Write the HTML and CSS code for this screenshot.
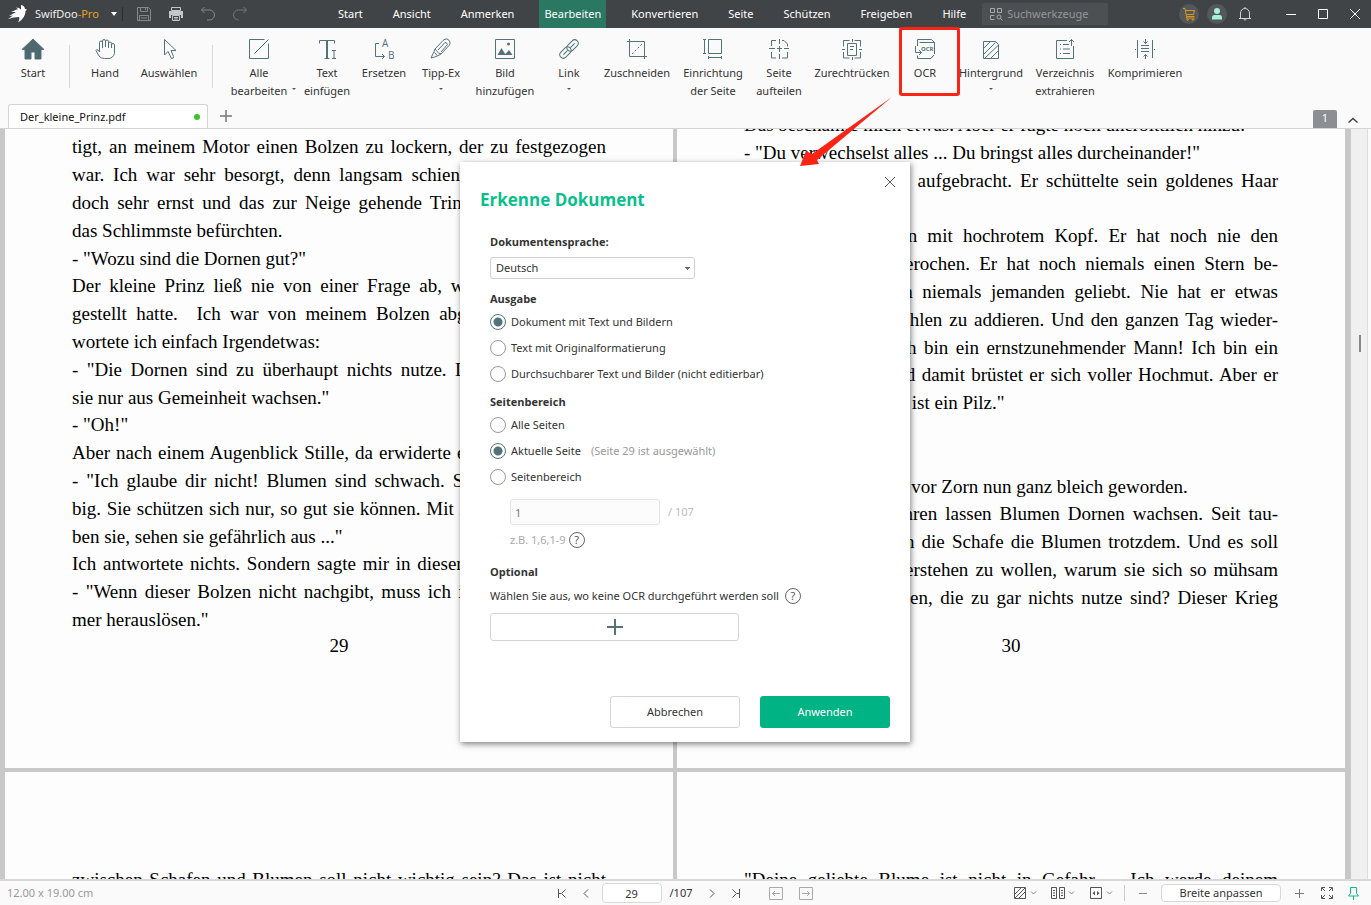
FILE: index.html
```html
<!DOCTYPE html>
<html lang="de">
<head>
<meta charset="utf-8">
<meta name="viewport" content="width=device-width, initial-scale=1">
<title>SwifDoo-Pro</title>
<link rel="stylesheet" href="styles.css">
</head>
<body>
<header class="titlebar">
  <div class="brand">
    <svg class="logo" viewBox="0 0 20 18" aria-hidden="true"><path d="M0 14 5 10.500 1 11 8 7 3 7 10 4 8 2.500 11 3 13 4.500 13 0Q16.500 .5 17 4L19 4.500 17.500 6Q17.500 13 10 17.500Q12 14 11 12Q6 12 0 14Z" fill="#fff"/></svg>
    <span class="brand-name">SwifDoo<span class="brand-pro">-Pro</span></span>
    <button class="brand-menu" aria-label="Produktmenü"><svg viewBox="0 0 6 4" width="6" height="4"><path d="M0 0h6L3 4z" fill="#fff"/></svg></button>
  </div>
  <div class="quick">
    <button aria-label="Speichern"><svg class="ic16" viewBox="0 0 16 16" fill="none" stroke="#86898c"><path d="M1.500 1.500h11l2 2v11h-13zM4.500 1.500v4h7v-4M3.500 14.500v-5h9v5M9.500 2v2M5 12h6"/></svg></button>
    <button aria-label="Drucken"><svg class="ic16" viewBox="0 0 16 16"><path d="M3.500 1.500h9v3h-9z" fill="none" stroke="#c4c6c8"/><path d="M1 5h14v7h-2V9H3v3H1z" fill="#c4c6c8"/><path d="M4.500 9.500h7v5h-7zM6 11.500h4M6 13h4" fill="none" stroke="#c4c6c8"/></svg></button>
    <button aria-label="Rückgängig"><svg class="ic16" viewBox="0 0 16 16" fill="none" stroke="#86898c"><path d="M4.500 1 1.500 4l3 3M1.500 4h8a5 5 0 0 1 0 10H7"/></svg></button>
    <button aria-label="Wiederholen"><svg class="ic16" viewBox="0 0 16 16" fill="none" stroke="#74777a"><path d="m11.500 1 3 3-3 3M14.500 4h-8a5 5 0 0 0 0 10"/></svg></button>
  </div>
  <nav class="menu">
    <button>Start</button><button>Ansicht</button><button>Anmerken</button><button class="active">Bearbeiten</button><button>Konvertieren</button><button>Seite</button><button>Schützen</button><button>Freigeben</button><button>Hilfe</button>
  </nav>
  <label class="search">
    <svg viewBox="0 0 14 14" width="14" height="14" fill="none" stroke="#a6a8aa"><path d="M1.500 1.500h4v4h-4zM8.500 1.500h4v4h-4zM5.500 8.500h-4v4h4"/><circle cx="10" cy="10" r="2"/><path d="m11.500 11.500 2 2"/></svg>
    <input type="text" placeholder="Suchwerkzeuge" aria-label="Suchwerkzeuge">
  </label>
  <div class="account">
    <button class="round" aria-label="Warenkorb"><svg class="ic16" viewBox="0 0 16 16" fill="none" stroke="#d8981c"><path d="M2 2.500h2l1.500 8h8M4.500 4.500h9l-1 4H5.500M5.500 10.500v1.500h8"/><circle cx="6.500" cy="13.500" r=".8"/><circle cx="12" cy="13.500" r=".8"/></svg></button>
    <button class="round" aria-label="Konto"><svg class="ic16" viewBox="0 0 16 16" fill="#a8f0d8"><circle cx="8" cy="5" r="3"/><path d="M3 13.500v-2q0-2.500 2.500-2.500h5q2.500 0 2.500 2.500v2z"/></svg></button>
    <button class="round plain" aria-label="Mitteilungen"><svg class="ic16" viewBox="0 0 16 16" fill="none" stroke="#d0d2d4"><path d="M2 12.500h12M3.500 12V7a4.500 4.500 0 0 1 9 0v5M8 1v1.500M6.500 13q1.500 2.500 3 0"/></svg></button>
  </div>
  <div class="window-controls">
    <button aria-label="Minimieren"><svg viewBox="0 0 12 12" width="12" height="12"><path d="M1 6.500h10" stroke="#fff"/></svg></button>
    <button aria-label="Maximieren"><svg viewBox="0 0 12 12" width="12" height="12"><path d="M1.500 1.500h9v9h-9z" stroke="#fff" fill="none"/></svg></button>
    <button aria-label="Schließen"><svg viewBox="0 0 12 12" width="12" height="12"><path d="m1 1 10 10M11 1 1 11" stroke="#fff"/></svg></button>
  </div>
</header>

<div class="ribbon" role="toolbar">
  <button class="tool t54"><svg viewBox="0 0 24 24"><path d="M12 2 1 12.500h3V22h6v-7h4v7h6v-9.500h3z" fill="#4f676e"/></svg><span>Start</span></button>
  <i class="rule rule-home"></i>
  <button class="tool t56"><svg viewBox="0 0 24 24"><path d="M18.500 11V6.500a1.500 1.500 0 0 0-3 0V11M15.500 10V4.500a1.500 1.500 0 0 0-3 0V10M12.500 10V4a1.500 1.500 0 0 0-3 0V11M9.500 11V5.500a1.500 1.500 0 0 0-3 0V15L5 13Q3.500 12 3 13.500L6 19q2 2.500 5.500 2.500h3.500q5 0 6.500-5V8a1.500 1.500 0 0 0-3 0"/></svg><span>Hand</span></button>
  <button class="tool t72"><svg viewBox="0 0 24 24"><path d="M7.500 2.500v15.500l3.500-3.500 3.500 7q2.500 0 2-2L14 13.500h5z"/></svg><span>Auswählen</span></button>
  <i class="rule rule-tools"></i>
  <button class="tool t76"><svg viewBox="0 0 24 24"><path d="M17.500 2.500h-15v19h19V6.500M7.500 16.500l14-14"/></svg><span>Alle<br>bearbeiten</span><i class="caret caret-side"></i></button>
  <button class="tool t60"><svg viewBox="0 0 24 24"><path d="M4.500 6.500v-3h15v3M11.500 3.500v18M12.500 3.500v18M9.500 21.500h5M17 13.500h4M19 13.500v8M17 21.500h4"/></svg><span>Text<br>einfügen</span></button>
  <button class="tool t54"><svg viewBox="0 0 24 24"><path d="M7 6.500H3.500v13h9M10 17l2.500 2.500L10 22"/><text x="10" y="10" font-size="10">A</text><text x="16" y="22" font-size="10">B</text></svg><span>Ersetzen</span></button>
  <button class="tool t60"><svg viewBox="0 0 24 24"><path d="m6 12 8-8.500q2-2 4-1.500t3 3q.5 2-1 3.500L12 17q-3-1-4-2.500T6 12zM6 12q-1 3-4 9 6-1 10-4M5.500 15.500l3 3.500M9 13l7-7.500q2 0 2.500 2L12 15"/></svg><span>Tipp-Ex</span><i class="caret"></i></button>
  <button class="tool t68"><svg viewBox="0 0 24 24"><path d="M2.500 2.500h19v19h-19z"/><path d="m4.500 18 4-7 3 5 1 1 3.500-4 3.500 5z" fill="#54727a" stroke="none"/><circle cx="15.500" cy="7" r="1.500" fill="#54727a" stroke="none"/></svg><span>Bild<br>hinzufügen</span></button>
  <button class="tool t60"><svg viewBox="0 0 24 24"><g transform="rotate(-45 12 12)"><rect x="0.500" y="8.500" width="13" height="7" rx="3.500"/><rect x="10.500" y="8.500" width="13" height="7" rx="3.500"/><path d="M4 12h6M14 12h6"/></g></svg><span>Link</span><i class="caret"></i></button>
  <button class="tool t76"><svg viewBox="0 0 24 24"><path d="M2 4.500h17.500V22M4.500 2v17.500H22"/><path d="m7 17 11-11" stroke-dasharray="2 2"/></svg><span>Zuschneiden</span></button>
  <button class="tool t76"><svg viewBox="0 0 24 24"><path d="M7.500 2.500h13v14h-13zM3.500 2.500v14M2 2.500h3M2 16.500h3M7.500 20.500h13M7.500 19v3M20.500 19v3"/></svg><span>Einrichtung<br>der Seite</span></button>
  <button class="tool t56"><svg viewBox="0 0 24 24"><path d="M9 3.500H4.500V9M15 3.500h2L20.500 7v2.500M4.500 15v6H9M15 21h5.500v-6M12.500 2v5M12.500 9v6M12.500 17v5M2 11.500h6M10 11.500h5M17 11.500h5"/></svg><span>Seite<br>aufteilen</span></button>
  <button class="tool t90"><svg viewBox="0 0 24 24"><path d="M7.500 6.500h9v12h-9zM10 9.500h4M10 12.500h3M9.500 3.500h-6v6M14.500 3.500h6v6M3.500 15v6h6M20.500 15v6h-6M12.500 2v3M12.500 20v3M2 12.500h3M19 12.500h3"/></svg><span>Zurechtrücken</span></button>
  <button class="tool t56 marked"><svg viewBox="0 0 24 24"><path d="M4.500 9V2.500h14l3 3V17M6.500 5.500h15M2.500 9v6.500h6M6 13l2.500 2.500L6 18M4.500 18.500v3h13.500l3-3.500"/><text x="8" y="14" font-size="6" font-weight="700">OCR</text></svg><span>OCR</span></button>
  <button class="tool t76"><svg viewBox="0 0 24 24"><path d="M4.500 4.500h12l3 3v14h-15z"/><path d="m5 11 6-6M5 17 16.500 5.500M6 21 19 8.500M12 21l7-7"/></svg><span>Hintergrund</span><i class="caret"></i></button>
  <button class="tool t72"><svg viewBox="0 0 24 24"><path d="M14 3.500H3.500v18h17V9M7 7.500h1M10 7.500h6M7 12h1M10 12h7M7 16.500h1M10 16.500h7M18.500 9V2.500M16 5l2.500-2.500L21 5"/></svg><span>Verzeichnis<br>extrahieren</span></button>
  <button class="tool t88"><svg viewBox="0 0 24 24"><path d="M4.500 3v18M19.500 3v18M8 8.500h8M8 11.500h8M8 14.500h8M12.500 2v4.500M10.500 4.500l2 2 2-2M12.500 22v-4.500M10.500 19.500l2-2 2 2M2 12.500h1M21 12.500h1"/></svg><span>Komprimieren</span></button>
</div>

<div class="tabs">
  <button class="tab">Der_kleine_Prinz.pdf<i class="dot"></i></button>
  <button class="tab-add" aria-label="Neuer Tab"><svg viewBox="0 0 12 12" width="12" height="12"><path d="M6 0v12M0 6h12" stroke="#777" stroke-width="1.500"/></svg></button>
  <span class="tab-count">1</span>
  <button class="collapse" aria-label="Menüband einklappen"><svg viewBox="0 0 12 8" width="12" height="8"><path d="m1.500 6.500 4.500-4 4.500 4" stroke="#444" stroke-width="1.500" fill="none"/></svg></button>
</div>

<main class="viewer">
  <div class="pages">
    <article class="page">
      <div class="passage">
        <p><span class="full">tigt, an meinem Motor einen Bolzen zu lockern, der zu festgezogen</span>
        <span class="full">war. Ich war sehr besorgt, denn langsam schien mir meine Panne</span>
        <span class="full">doch sehr ernst und das zur Neige gehende Trinkwasser ließ mich</span>
        <span>das Schlimmste befürchten.</span></p>
        <p><span>- "Wozu sind die Dornen gut?"</span></p>
      </div>
      <div class="passage">
        <p><span class="full">Der kleine Prinz ließ nie von einer Frage ab, wenn er sie einmal</span>
        <span class="full">gestellt hatte.&nbsp; Ich war von meinem Bolzen abgelenkt, drum ant-</span>
        <span>wortete ich einfach Irgendetwas:</span></p>
        <p><span class="full">- "Die Dornen sind zu überhaupt nichts nutze. Die Blumen lassen</span>
        <span>sie nur aus Gemeinheit wachsen."</span></p>
      </div>
      <div class="passage">
        <p><span>- "Oh!"</span></p>
        <p><span class="full">Aber nach einem Augenblick Stille, da erwiderte er mir voller Groll:</span></p>
        <p><span class="full">- "Ich glaube dir nicht! Blumen sind schwach. Sie sind leichtgläu-</span>
        <span class="full">big. Sie schützen sich nur, so gut sie können. Mit ihren Dornen glau-</span>
        <span>ben sie, sehen sie gefährlich aus ..."</span></p>
      </div>
      <div class="passage">
        <p><span class="full">Ich antwortete nichts. Sondern sagte mir in diesem Augenblick nun:</span></p>
        <p><span class="full">- "Wenn dieser Bolzen nicht nachgibt, muss ich ihn mit dem Ham-</span>
        <span>mer herauslösen."</span></p>
      </div>
      <footer class="folio">29</footer>
    </article>
    <article class="page">
      <div class="passage">
        <p><span>Das beschämte mich etwas. Aber er fügte noch unerbittlich hinzu:</span></p>
        <p><span>- "Du verwechselst alles ... Du bringst alles durcheinander!"</span></p>
        <p><span class="full">Er war wirklich sehr aufgebracht. Er schüttelte sein goldenes Haar</span>
        <span>im Wind:</span></p>
      </div>
      <div class="passage">
        <p><span class="full">- "Da war ein Mann mit hochrotem Kopf. Er hat noch nie den</span>
        <span class="full">Duft einer Blume gerochen. Er hat noch niemals einen Stern be-</span>
        <span class="full">trachtet. Er hat noch niemals jemanden geliebt. Nie hat er etwas</span>
        <span class="full">anderes getan, als Zahlen zu addieren. Und den ganzen Tag wieder-</span>
        <span class="full">holt er beständig: 'Ich bin ein ernstzunehmender Mann! Ich bin ein</span></p>
      </div>
      <div class="passage">
        <p><span class="full">wichtiger Mann!' Und damit brüstet er sich voller Hochmut. Aber er</span>
        <span>ist ja kein Mensch, er ist ein Pilz."</span></p>
        <p><span>- "Ein was?"</span></p>
        <p><span>- "Ein Pilz!"</span></p>
        <p><span>Der kleine Prinz war&nbsp; vor Zorn nun ganz bleich geworden.</span></p>
      </div>
      <div class="passage last">
        <p><span class="full">- "Seit tausenden Jahren lassen Blumen Dornen wachsen. Seit tau-</span>
        <span class="full">senden Jahren fressen die Schafe die Blumen trotzdem. Und es soll</span>
        <span class="full">nicht wichtig sein, verstehen zu wollen, warum sie sich so mühsam</span>
        <span class="full">Dornen wachsen lassen, die zu gar nichts nutze sind? Dieser Krieg</span></p>
      </div>
      <footer class="folio">30</footer>
    </article>
    <article class="page next"><p><span class="full">zwischen Schafen und Blumen soll nicht wichtig sein? Das ist nicht</span></p></article>
    <article class="page next"><p><span class="full">"Deine geliebte Blume ist nicht in Gefahr ... Ich werde deinem</span></p></article>
  </div>
  <div class="scrollbar"><i class="thumb"></i></div>
</main>

<footer class="status">
  <span class="size">12.00 x 19.00 cm</span>
  <div class="pager">
    <button aria-label="Erste Seite"><svg viewBox="0 0 16 16"><path d="M4.500 4v9M11.500 4.500l-4 4 4 4M5 8.500h2"/></svg></button>
    <button aria-label="Vorherige Seite"><svg viewBox="0 0 16 16"><path d="m10 4.500-4 4 4 4"/></svg></button>
    <input class="page-no" type="text" value="29" aria-label="Seite">
    <span class="total">/107</span>
    <button class="next-page" aria-label="Nächste Seite"><svg viewBox="0 0 16 16"><path d="m6 4.500 4 4-4 4"/></svg></button>
    <button aria-label="Letzte Seite"><svg viewBox="0 0 16 16"><path d="M11.500 4v9M4.500 4.500l4 4-4 4M9 8.500h2"/></svg></button>
    <button class="faint history" aria-label="Zurück"><svg viewBox="0 0 16 16"><path d="M1.500 2.500h13v12h-13zM12 8.500H4.500M7 6 4.500 8.500 7 11"/></svg></button>
    <button class="faint" aria-label="Vorwärts"><svg viewBox="0 0 16 16"><path d="M1.500 2.500h13v12h-13zM4 8.500h7.500M9 6l2.500 2.500L9 11"/></svg></button>
  </div>
  <div class="view">
    <div class="modes">
      <button class="mode" aria-label="Hintergrund"><svg viewBox="0 0 26 16"><path d="M2.500 2.500h11v11h-11zM3 9l6-6M3 13 13 3M7 13l6-6"/><path d="m19 6.500 2.500 2.500L24 6.500" stroke="#888"/></svg></button>
      <button class="mode" aria-label="Seitenlayout"><svg viewBox="0 0 26 16"><path d="M1.500 2.500h5v11h-5zM9.500 2.500h5v11h-5zM3 5.500h2M3 8h2M3 10.500h2M11 5.500h2M11 8h2M11 10.500h2"/><path d="m19 6.500 2.500 2.500L24 6.500" stroke="#888"/></svg></button>
      <button class="mode" aria-label="Anpassung"><svg viewBox="0 0 26 16"><path d="M2.500 2.500h11v11h-11z"/><path d="M7 6v4.500L4.500 8.200zM9 6v4.500l2.500-2.300z" fill="#555" stroke="none"/><path d="m19 6.500 2.500 2.500L24 6.500" stroke="#888"/></svg></button>
    </div>
    <i class="divider"></i>
    <button aria-label="Verkleinern"><svg viewBox="0 0 16 16"><path d="M4 8.500h8" stroke="#888"/></svg></button>
    <button class="zoom">Breite anpassen</button>
    <button class="zoom-in" aria-label="Vergrößern"><svg viewBox="0 0 16 16"><path d="M4 8.500h9M8.500 4v9" stroke="#777"/></svg></button>
    <button aria-label="Vollbild"><svg viewBox="0 0 16 16"><path d="M2.500 6V2.500H6M10 2.500h3.500V6M13.500 10v3.500H10M6 13.500H2.500V10M3 3l3 3M13 3l-3 3M13 13l-3-3M3 13l3-3"/></svg></button>
    <button aria-label="Anheften"><svg viewBox="0 0 16 16"><path d="M5.500 2.500h6v6l2 2.500H3.500l2-2.500zM8.500 11v4" stroke="#14b887"/></svg></button>
  </div>
</footer>

<div class="overlay">
  <form class="dialog" role="dialog" aria-labelledby="dialog-title">
    <button type="button" class="close" aria-label="Schließen"><svg viewBox="0 0 12 12" width="12" height="12"><path d="m1 1 10 10M11 1 1 11" stroke="#555"/></svg></button>
    <h1 id="dialog-title">Erkenne Dokument</h1>
    <div class="fields">
      <label class="heading" for="language">Dokumentensprache:</label>
      <select id="language"><option>Deutsch</option></select>
      <h2 class="heading">Ausgabe</h2>
      <label class="option"><input type="radio" name="output" checked>Dokument mit Text und Bildern</label>
      <label class="option"><input type="radio" name="output">Text mit Originalformatierung</label>
      <label class="option"><input type="radio" name="output">Durchsuchbarer Text und Bilder (nicht editierbar)</label>
      <h2 class="heading range">Seitenbereich</h2>
      <label class="option"><input type="radio" name="range">Alle Seiten</label>
      <label class="option"><input type="radio" name="range" checked>Aktuelle Seite<span class="note">(Seite 29 ist ausgewählt)</span></label>
      <label class="option"><input type="radio" name="range">Seitenbereich</label>
      <div class="range-row"><input type="text" value="1" aria-label="Seitenbereich" disabled><span>/ 107</span></div>
      <div class="hint">z.B. 1,6,1-9<button type="button" class="help" aria-label="Hilfe zum Seitenbereich">?</button></div>
      <h2 class="heading optional">Optional</h2>
      <div class="exclude">Wählen Sie aus, wo keine OCR durchgeführt werden soll<button type="button" class="help" aria-label="Hilfe zu OCR-Ausnahmen">?</button></div>
      <button type="button" class="add" aria-label="Bereich hinzufügen"><svg viewBox="0 0 16 16" width="16" height="16"><path d="M8 0v16M0 8h16" stroke="#54727a" stroke-width="2"/></svg></button>
    </div>
    <div class="actions"><button type="button" class="btn">Abbrechen</button><button type="button" class="btn primary">Anwenden</button></div>
  </form>
</div>
<svg class="arrow" viewBox="0 0 96 72" aria-hidden="true"><path d="M93 1 13 58 7 55 1 70 20 68 18 64z" fill="#fb2414"/></svg>
</body>
</html>
```

FILE: styles.css
```css
* { box-sizing: border-box; }
html, body { height: 100%; }
body {
  margin: 0;
  display: flex;
  flex-direction: column;
  position: relative;
  overflow: hidden;
  background: #fafafa;
  color: #333;
  font: 11px/16px "Noto Sans", "Open Sans", sans-serif;
}
button, input, select { font: inherit; color: inherit; margin: 0; }
button { border: 0; padding: 0; background: none; }
svg { display: block; }
.ic16 { width: 16px; height: 16px; }

.titlebar { display: flex; align-items: center; height: 28px; flex: none; background: #414447; color: #fff; }
.brand { display: flex; align-items: center; width: 123px; height: 14px; padding-left: 8px; border-right: 1px solid #2c2e30; }
.logo { width: 20px; height: 18px; margin-right: 7px; }
.brand-name { width: 72px; color: #eee; }
.brand-pro { color: #e6a01e; }
.brand-menu { margin-left: 4px; }
.quick { display: flex; gap: 16px; padding-left: 13px; width: 210px; }
.menu { display: flex; gap: 20px; align-self: stretch; }
.menu button { padding: 0 5px; }
.menu .active { background: #2a7862; }
.search { display: flex; align-items: center; gap: 4px; width: 126px; height: 22px; margin-left: 11px; padding-left: 7px; background: #4d5052; border-radius: 2px; }
.search input { width: 90px; padding: 0; border: 0; background: none; }
.search input::placeholder { color: #939698; opacity: 1; }
.account { display: flex; gap: 8px; margin-left: auto; margin-right: 30px; }
.round { display: grid; place-items: center; width: 20px; height: 20px; border-radius: 50%; background: #55585a; }
.round.plain { background: none; }
.window-controls { display: flex; gap: 20px; padding-right: 10px; }

.ribbon { display: flex; align-items: flex-start; flex: none; height: 76px; padding-left: 6px; }
.tool { position: relative; flex: none; padding-top: 9px; line-height: 18px; text-align: center; white-space: nowrap; }
.tool svg { width: 24px; height: 24px; margin: 0 auto 3px; overflow: visible; fill: none; stroke: #54727a; stroke-width: 1; }
.tool text { fill: #54727a; stroke: none; font-family: "Open Sans", sans-serif; }
.tool span { display: block; }
.t54 { width: 54px; } .t56 { width: 56px; } .t60 { width: 60px; } .t68 { width: 68px; }
.t72 { width: 72px; } .t76 { width: 76px; } .t88 { width: 88px; } .t90 { width: 90px; }
.rule { width: 1px; height: 43px; margin-top: 17px; background: #d8d8d8; }
.rule-home { margin-left: 9px; margin-right: 7px; }
.rule-tools { margin-left: 7px; margin-right: 8px; }
.caret { display: block; width: 4px; margin: 6px auto 0; border: 2px solid transparent; border-top-color: #555; border-bottom: 0; }
.caret-side { position: absolute; right: 1px; bottom: 10px; }
.marked::after { content: ""; box-sizing: border-box; position: absolute; inset: -1px -7px auto 2px; height: 69px; border: 3px solid #fb2414; border-radius: 3px; }

.tabs { display: flex; align-items: flex-end; flex: none; height: 25px; padding: 0 12px 0 8px; border-bottom: 1px solid #d4d4d4; }
.tab { display: flex; align-items: center; justify-content: space-between; width: 200px; height: 24px; padding: 0 7px 0 11px; background: #fff; border: 1px solid #d4d4d4; border-bottom: 0; border-radius: 3px 3px 0 0; color: #111; }
.dot { width: 6px; height: 6px; border-radius: 50%; background: #34c724; }
.tab-add { margin: 0 auto 6px 12px; }
.tab-count { width: 24px; height: 18px; background: #8b8f93; border-radius: 2px 2px 0 0; color: #fff; text-align: center; }
.collapse { margin: 0 0 4px 10px; }

.viewer { display: flex; flex: 1; min-height: 0; border-right: 3px solid #fafafa; }
.pages { display: grid; grid-template-columns: 1fr 1fr; grid-template-rows: minmax(0, 1fr) 107px; gap: 4px; flex: 1; padding: 0 6px 0 5px; background: #c8c8c8; }
.page { display: flex; flex-direction: column; justify-content: flex-end; min-width: 0; overflow: hidden; padding: 0 67px 110px; background: #fdfdfd; color: #000; font: 19px/28px "Liberation Serif", serif; }
.page p { margin: 0; }
.page span { display: block; white-space: nowrap; }
.page .full { text-align: justify; text-align-last: justify; }
.passage { flex: none; }
.passage + .passage { margin-top: -1px; }
.passage.last { padding-bottom: 22px; }
.folio { flex: none; line-height: 24px; text-align: center; }
.page.next { justify-content: flex-start; padding-top: 94px; padding-bottom: 0; }
.scrollbar { width: 17px; background: #f0f0f0; border-right: 1px solid #ddd; }
.thumb { display: block; width: 2px; height: 17px; margin: 206px 0 0 8px; background: #888; }

.status { display: grid; grid-template-columns: 1fr auto 1fr; align-items: center; flex: none; height: 26px; padding: 0 10px 0 7px; border-top: 2px solid #d8d8d8; }
.status svg { width: 16px; height: 16px; fill: none; stroke: #555; }
.size { color: #999; }
.pager { display: flex; align-items: center; gap: 8px; }
.page-no { width: 60px; height: 20px; padding: 0; border: 1px solid #d8d8d8; border-radius: 4px; background: #fff; text-align: center; }
.next-page { margin-left: 4px; }
.history { margin-left: 16px; margin-right: 6px; }
.status .faint svg { stroke: #aaa; }
.view { display: flex; align-items: center; justify-content: flex-end; gap: 10px; }
.modes { display: flex; gap: 12px; }
.status .mode svg { width: 26px; }
.divider { width: 1px; height: 16px; background: #ccc; }
.zoom { width: 120px; height: 18px; border: 1px solid #d8d8d8; border-radius: 4px; background: #fff; }
.zoom-in { margin-right: 2px; }

.overlay { position: absolute; inset: 0; display: flex; align-items: center; justify-content: center; padding: 0 1px 1px 0; }
.dialog { position: relative; width: 450px; padding: 26px 20px 14px; background: #fff; box-shadow: 1px 2px 6px rgba(0, 0, 0, .5); }
.close { position: absolute; top: 14px; right: 14px; }
.dialog h1 { margin: 0; color: #0abf8d; font-family: "Open Sans", sans-serif; font-size: 17px; line-height: 24px; }
.fields { display: flex; flex-direction: column; align-items: flex-start; padding: 22px 10px 0; }
.heading { margin: 0; font-family: "Open Sans", sans-serif; font-size: 11px; line-height: 16px; font-weight: 700; }
.fields select { appearance: none; width: 205px; height: 22px; margin: 7px 0 12px; padding: 0 5px; border: 1px solid #d0d0d0; border-radius: 3px; background: linear-gradient(#54727a, #54727a) 194px 9px / 5px 1px no-repeat, linear-gradient(#54727a, #54727a) 195px 10px / 3px 1px no-repeat, linear-gradient(#54727a, #54727a) 196px 11px / 1px 1px no-repeat, #fff; }
.heading + .option { margin-top: 2px; }
.range { margin-top: 7px; }
.option { display: flex; align-items: center; gap: 5px; height: 26px; }
.option input { appearance: none; width: 16px; height: 16px; border: 1px solid #999; border-radius: 50%; background: #fff; }
.option input:checked { border-color: #54727a; background: radial-gradient(circle, #54727a 4px, #fff 5px); }
.note { margin-left: 5px; color: #999; }
.range-row { display: flex; align-items: center; gap: 8px; margin: 9px 0 7px 20px; color: #bbb; }
.range-row input { width: 150px; height: 26px; padding: 0 4px; border: 1px solid #e4e4e4; border-radius: 3px; background: #fcfcfc; color: #777; }
.hint { display: flex; align-items: center; gap: 3px; margin-left: 20px; color: #aaa; }
.help { width: 16px; height: 16px; border: 1px solid #666; border-radius: 50%; color: #555; line-height: 14px; }
.optional { margin-top: 16px; }
.exclude { display: flex; gap: 6px; margin: 8px 0 9px; }
.add { display: grid; place-items: center; width: 249px; height: 28px; border: 1px solid #d4d4e0; border-radius: 3px; }
.actions { display: flex; justify-content: flex-end; gap: 20px; margin-top: 55px; }
.btn { width: 130px; height: 32px; border: 1px solid #d4d4e0; border-radius: 3px; background: #fff; }
.primary { border-color: #00b384; background: #00b384; color: #fff; }
.arrow { position: absolute; left: 799px; top: 96px; width: 96px; height: 72px; }
```
